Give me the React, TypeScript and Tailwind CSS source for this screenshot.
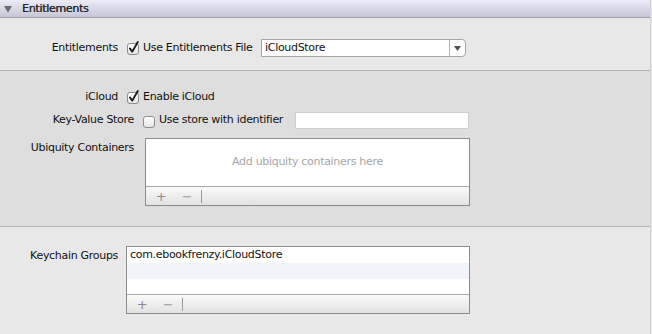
import React from "react";

const font = { fontFamily: '"DejaVu Sans", "Liberation Sans", sans-serif' };

function Checkbox({ checked }: { checked: boolean }) {
  return (
    <svg width="14" height="14" viewBox="0 0 14 14" className="shrink-0">
      <defs>
        <linearGradient id="cbg" x1="0" y1="0" x2="0" y2="1">
          <stop offset="0" stopColor="#ffffff" />
          <stop offset="1" stopColor="#e4e4e4" />
        </linearGradient>
      </defs>
      <rect x="1.5" y="2.5" width="11" height="11" rx="2.5" fill="url(#cbg)" stroke="#8e8e8e" />
      {checked && (
        <path d="M4 7.5 L6.3 10.6 L11.8 1" fill="none" stroke="#1a1a1a" strokeWidth="1.9" strokeLinecap="round" strokeLinejoin="round" />
      )}
    </svg>
  );
}

function ListBox({ children, width }: { children: React.ReactNode; width: string }) {
  return (
    <div className={`${width} h-[68px] border border-[#8c8c8c] bg-white flex flex-col`}>
      <div className="flex-1 overflow-hidden">{children}</div>
      <div className="h-[19px] border-t border-[#a8a8a8] bg-gradient-to-b from-[#fafafa] to-[#e2e2e2] flex items-center">
        <span className="w-[22px] text-center text-[13px] leading-none text-[#8a8a8a] ml-[4px]">+</span>
        <span className="w-[22px] text-center text-[13px] leading-none text-[#9a9a9a] ml-[4px]">−</span>
        <span className="w-px h-[13px] bg-[#9a9a9a] ml-[3px]" />
      </div>
    </div>
  );
}

export default function App() {
  return (
    <div className="w-[652px] h-[334px] bg-[#e8e8e8] text-[11px] tracking-[-0.3px] text-[#111] overflow-hidden" style={font}>
      <div className="w-[651px] h-full border-r border-[#d2d2d2] flex flex-col">
        {/* header */}
        <div className="h-[18px] border-b border-[#9c9cab] bg-gradient-to-b from-[#ececf7] to-[#c6c6d6] flex items-center">
          <svg width="8" height="7" viewBox="0 0 8 7" className="ml-[4px] mt-[1px]">
            <path d="M0 0 H8 L4 6.5 Z" fill="#6c6c6c" />
          </svg>
          <span className="ml-[10px] text-[#2e2e2e] text-[11px] leading-none [text-shadow:0.3px_0_0_#2e2e2e]">Entitlements</span>
        </div>

        {/* section 1 */}
        <div className="h-[53px] border-b border-[#b4b4b4] bg-[#e8e8e8] pt-[21px]">
          <div className="flex items-center h-[18px]">
            <span className="w-[118px] text-right">Entitlements</span>
            <span className="ml-[8px]"><Checkbox checked /></span>
            <span className="ml-[3px]">Use Entitlements File</span>
            <div className="ml-auto mr-[184px] w-[205px] h-[18px] border border-[#a4a4a4] rounded-r-[4px] bg-white flex items-center">
              <span className="pl-[3px] flex-1">iCloudStore</span>
              <div className="w-[16px] h-full border-l border-[#b4b4b4] flex items-center justify-center">
                <svg width="7" height="5" viewBox="0 0 7 5"><path d="M0 0 H7 L3.5 5 Z" fill="#505050" /></svg>
              </div>
            </div>
          </div>
        </div>

        {/* section 2 */}
        <div className="h-[156px] border-b border-[#b4b4b4] bg-[#dedede] pt-[17px]">
          <div className="flex items-center h-[18px]">
            <span className="w-[118px] text-right">iCloud</span>
            <span className="ml-[8px]"><Checkbox checked /></span>
            <span className="ml-[3px]">Enable iCloud</span>
          </div>
          <div className="flex items-center h-[17px] mt-[6px]">
            <span className="w-[134px] text-right">Key-Value Store</span>
            <span className="ml-[8px]"><Checkbox checked={false} /></span>
            <span className="ml-[3px]">Use store with identifier</span>
            <div className="ml-auto mr-[181px] w-[174px] h-[17px] border border-[#cfcfcf] bg-white" />
          </div>
          <div className="flex items-start mt-[9px]">
            <span className="w-[134px] text-right leading-none mt-[4px]">Ubiquity Containers</span>
            <div className="ml-[11px]">
              <ListBox width="w-[325px]">
                <div className="h-full flex items-center justify-center text-[#a6a6a6]">Add ubiquity containers here</div>
              </ListBox>
            </div>
          </div>
        </div>

        {/* section 3 */}
        <div className="flex-1 bg-[#e8e8e8] pt-[19px]">
          <div className="flex items-start">
            <span className="w-[118px] text-right leading-none mt-[4px]">Keychain Groups</span>
            <div className="ml-[8px]">
              <ListBox width="w-[344px]">
                <div className="h-[16px] flex items-center pl-[3px] bg-white">com.ebookfrenzy.iCloudStore</div>
                <div className="h-[16px] bg-[#f1f4f9]" />
                <div className="h-[16px] bg-white" />
              </ListBox>
            </div>
          </div>
        </div>
      </div>
    </div>
  );
}
